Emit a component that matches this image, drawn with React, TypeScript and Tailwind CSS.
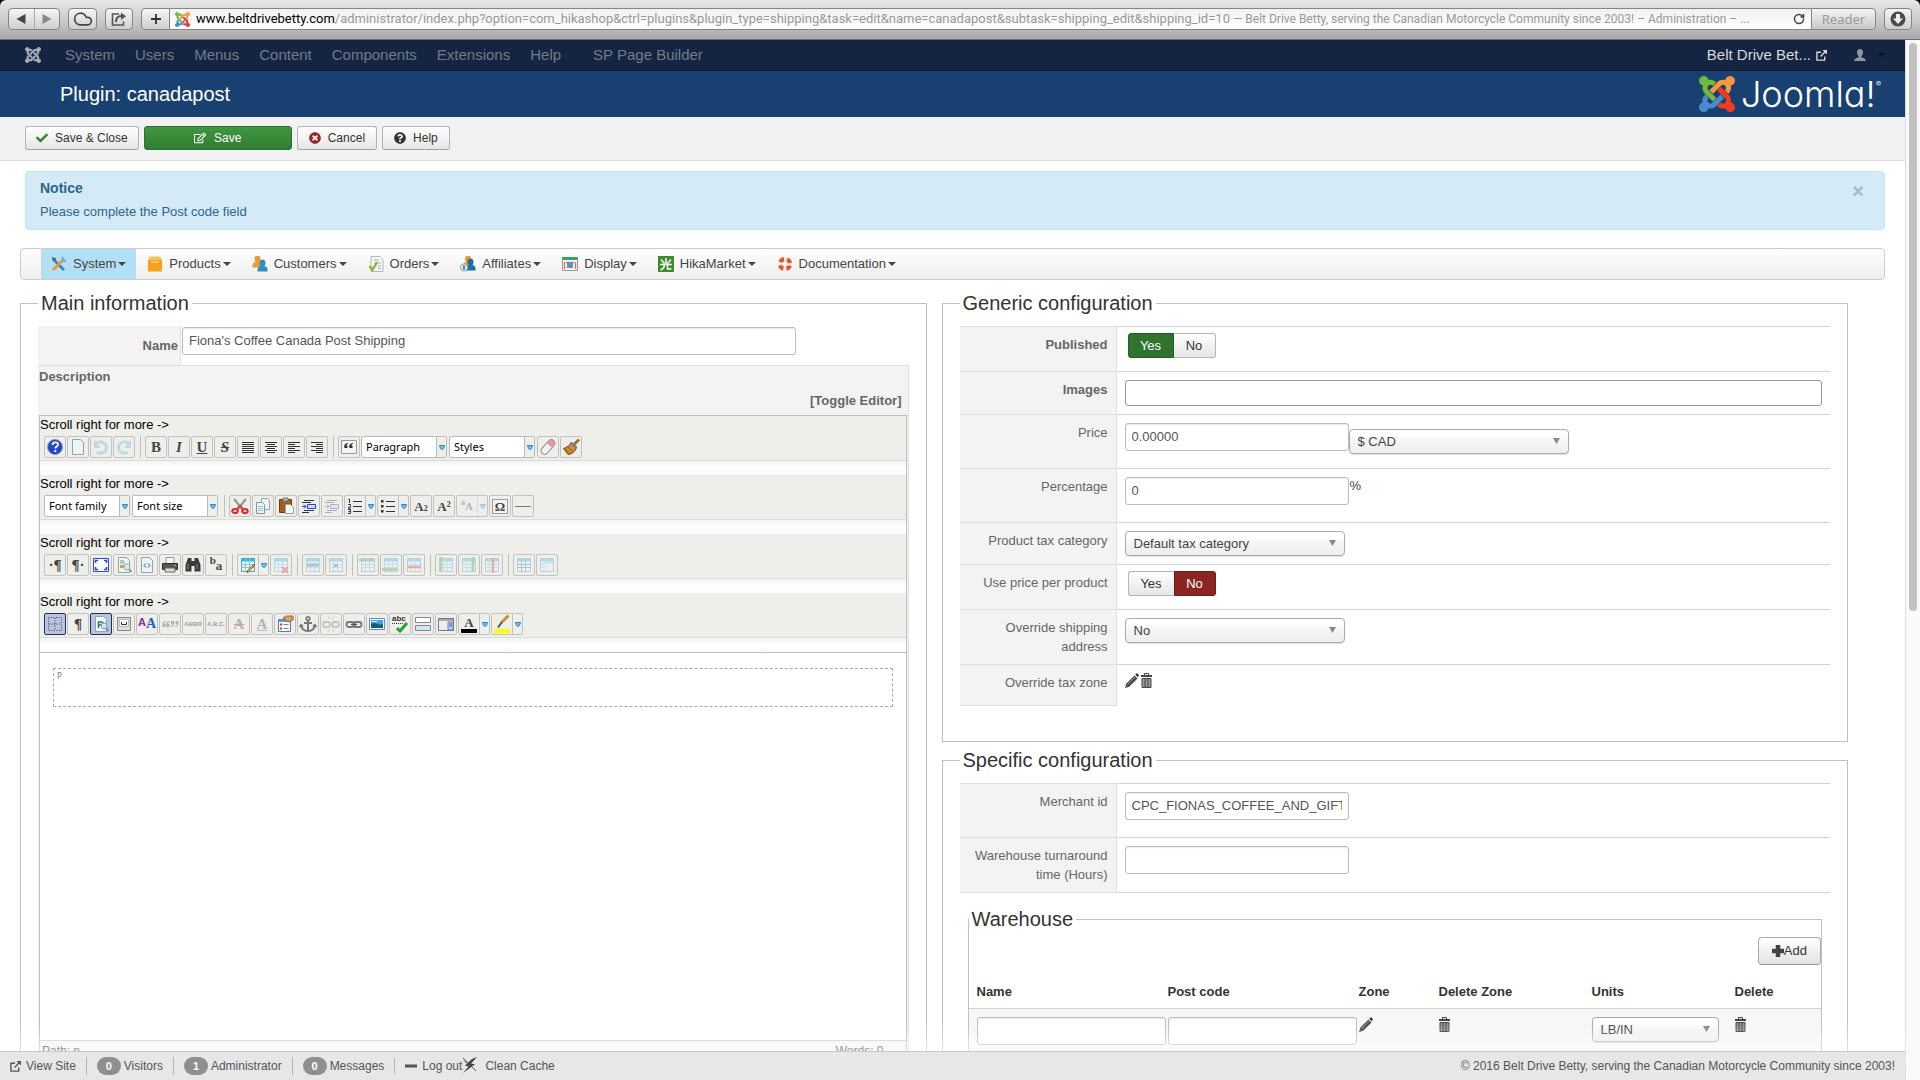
import React from "react";
import { FaCheck, FaTimesCircle, FaQuestionCircle, FaRegEdit } from "react-icons/fa";
import { Cloud, RotateCw } from "lucide-react";

type Kids = { children?: React.ReactNode };

const ARMS = [
  "M.6 92.1C.6 58.8 27.4 32 60.4 32c30 0 54.5 21.9 59.2 50.2 32.6-7.6 67.1.6 96.5 30l-44.3 44.3c-20.5-20.5-42.6-16.3-55.4-3.5-14.3 14.3-14.3 37.9 0 52.2l99.5 99.5-44 44.3c-87.7-87.2-49.7-49.7-99.8-99.7-26.8-26.5-35-64.8-24.8-98.9C20.4 144.6.6 120.7.6 92.1z",
  "M130.1 208.5l44.3 44.3c10-10 89.7-89.7 99.7-99.8 14.3-14.3 37.6-14.3 51.9 0 12.8 12.8 17 35-3.5 55.4l44 44.3c31.2-31.2 38.5-67.6 28.9-101.2 29.2-4.1 51.9-29.2 51.9-59.5 0-33.2-26.8-60.1-59.8-60.1-30.3 0-55.4 22.5-59.5 51.6-33.8-9.9-71.7-1.5-98.3 25.1-18.3 19.1-71.1 71.5-99.6 99.9z",
  "M396.4 360.7c8.2-32.7-.9-68.5-26.3-93.9-11.8-12.2 5 4.7-99.5-99.7l-44.3 44.3 99.7 99.7c14.3 14.3 14.3 37.6 0 51.9-12.8 12.8-35 17-55.4-3.5l-44 44.3c27.6 30.2 68 38.8 102.7 28 5.5 27.4 29.7 48.1 58.9 48.1 33 0 59.8-26.8 59.8-60.1 0-30.2-22.5-55-51.6-59.1z",
  "M312.1 307.6l-44-44.3c-87 86.4-50.4 50.4-99.7 99.8-14.3 14.3-37.6 14.3-51.9 0-13.1-13.4-16.9-35.3 3.2-55.4l-44-44.3c-30.2 30.2-38 65.2-29.5 98.3-26.7 6-46.2 29.9-46.2 58.2C0 453.2 26.8 480 59.8 480c28.6 0 52.5-19.8 58.6-46.7 32.7 8.2 68.5-.6 94.2-26 32.1-32 12.2-12.4 99.5-99.7z",
];

function JoomlaMark({ className, colors }: { className: string; colors: string[] }) {
  return (
    <svg className={className} viewBox="0 32 448 448" aria-hidden="true">
      {ARMS.map((d, i) => (
        <path key={i} d={d} fill={colors[i]} />
      ))}
    </svg>
  );
}
const BRAND = ["#71b93f", "#f9993a", "#f23a20", "#4a8bce"];
const MONO = ["#a3abb7", "#a3abb7", "#a3abb7", "#a3abb7"];

/* ---------- browser bar ---------- */
const chromeBtn =
  "flex h-[22px] items-center justify-center rounded border border-[#858585] bg-linear-to-b from-[#f6f6f6] to-[#cfcfcf] text-[#444]";

function BrowserBar() {
  return (
    <div className="flex h-10 shrink-0 items-start gap-2 rounded-t-md border-b border-[#6d6d6d] bg-linear-to-b from-[#e8e8e8] via-[#cccccc] to-[#a9a9a9] px-2 pt-2">
      <div className={chromeBtn + " w-[52px]"}>
        <button aria-label="Back" className="flex h-full flex-1 items-center justify-center border-r border-[#aaa]">
          <svg className="h-2.5 w-2.5" viewBox="0 0 10 10"><path d="M9.500 0v10L0.500 5z" fill="#444" /></svg>
        </button>
        <button aria-label="Forward" className="flex h-full flex-1 items-center justify-center">
          <svg className="h-2.5 w-2.5" viewBox="0 0 10 10"><path d="M.5 0v10L9.500 5z" fill="#8a8a8a" /></svg>
        </button>
      </div>
      <button aria-label="iCloud" className={chromeBtn + " w-[29px]"}><Cloud className="h-5 w-5" strokeWidth={2} /></button>
      <button aria-label="Share" className={chromeBtn + " w-7"}>
        <svg className="h-4 w-4" viewBox="0 0 16 16" fill="none" stroke="#555" strokeWidth="1.600">
          <path d="M8 3H1.500v11h11v-3.500" />
          <path d="M5 11c0-4 2-6 5.500-6" strokeWidth="2" />
          <path d="M10 1.500l5 3.700-5 3.700z" fill="#555" stroke="none" />
        </svg>
      </button>
      <div className="flex h-[22px] min-w-0 flex-1">
        <button aria-label="New tab" className="flex w-[29px] shrink-0 items-center justify-center rounded-l border border-[#858585] bg-linear-to-b from-[#f6f6f6] to-[#cfcfcf]">
          <svg className="h-3 w-3" viewBox="0 0 12 12"><path d="M6 1v10M1 6h10" stroke="#333" strokeWidth="1.800" /></svg>
        </button>
        <div className="flex min-w-0 flex-1 items-center border-y border-[#858585] bg-linear-to-b from-[#f1f1f1] to-white pl-[5px] font-['Roboto',sans-serif] whitespace-nowrap text-[#999]">
          <JoomlaMark className="mr-1.5 h-[15px] w-[15px] shrink-0" colors={BRAND} />
          <span className="shrink-0 text-[13px] text-black">www.beltdrivebetty.com</span>
          <span className="shrink-0 text-[13px]">
            /administrator/index.php?option=com_hikashop&amp;ctrl=plugins&amp;plugin_type=shipping&amp;task=edit&amp;name=canadapost&amp;subtask=shipping_edit&amp;shipping_id=10
          </span>
          <span className="ml-[3px] shrink-0 text-[12px]">
            — Belt Drive Betty, serving the Canadian Motorcycle Community since 2003! – Administration – ...
          </span>
          <button aria-label="Reload" className="mr-1.5 ml-auto text-[#444]"><RotateCw className="h-3 w-3" strokeWidth={3} /></button>
        </div>
        <button className="w-[65px] shrink-0 rounded-r border border-[#858585] bg-linear-to-b from-[#f4f4f4] to-[#c9c9c9] font-['Noto_Sans',sans-serif] text-[13px] leading-5 text-[#999]">
          Reader
        </button>
      </div>
      <button aria-label="Downloads" className={chromeBtn + " w-7"}>
        <svg className="h-4 w-4" viewBox="0 0 16 16">
          <circle cx="8" cy="8" r="7.500" fill="#4a4a4a" />
          <path d="M6 3h4v4.500h3L8 13 3 7.500h3z" fill="#eee" />
        </svg>
      </button>
    </div>
  );
}

/* ---------- Joomla bars ---------- */
function Caret({ className = "text-[#444]" }: { className?: string }) {
  return (
    <svg className={"h-1 w-2 " + className} viewBox="0 0 8 4" aria-hidden="true">
      <path d="M0 0h8L4 4z" fill="currentColor" />
    </svg>
  );
}

function TopNav() {
  const items = ["System", "Users", "Menus", "Content", "Components", "Extensions", "Help"];
  return (
    <nav className="flex h-[31px] shrink-0 items-center border-b border-[#0d1a2e] bg-[#152541] pr-[19px] pl-[25px] text-[15px] text-[#717a89]">
      <a href="#" aria-label="Joomla" className="mr-3.5"><JoomlaMark className="h-4 w-4" colors={MONO} /></a>
      {items.map((t) => (
        <a key={t} href="#" className="px-2.5">{t}</a>
      ))}
      <a href="#" className="pr-2.5 pl-[22px]">SP Page Builder</a>
      <a href="#" className="ml-auto flex items-center gap-[5px] text-[#d9d9d9]">
        Belt Drive Bet... <ExternalIcon className="h-[11px] w-[11px]" />
      </a>
      <button aria-label="User menu" className="ml-[27px] flex items-center gap-3">
        <svg className="h-3 w-3" viewBox="0 0 12 12" fill="#8e96a3">
          <path d="M6 0c2 0 3 1.400 3 3.200S8 6.600 7.300 7.300v.9c2.200.4 4.200 1.200 4.700 3.800H0c.5-2.600 2.500-3.400 4.700-3.800v-.9C4 6.600 3 5 3 3.200S4 0 6 0z" />
        </svg>
        <Caret className="text-[#0b1320]" />
      </button>
    </nav>
  );
}

function ExternalIcon({ className }: { className: string }) {
  return (
    <svg className={className} viewBox="0 0 12 12" fill="none" stroke="currentColor" strokeWidth="1.500" aria-hidden="true">
      <path d="M5.500 2.500H1V11h8.500V7" />
      <path d="M5 7l5-5" />
      <path d="M7 0h5v5z" fill="currentColor" stroke="none" />
    </svg>
  );
}

function Header() {
  return (
    <header className="flex h-[46px] shrink-0 items-center bg-[#184172] pr-6 pl-[60px] text-white">
      <h1 className="text-[20px] leading-7">Plugin: canadapost</h1>
      <div className="ml-auto flex items-center gap-1.5">
        <JoomlaMark className="h-9 w-9" colors={BRAND} />
        <span className="flex items-start font-['Inter',sans-serif] text-[36px] leading-9 font-light [font-feature-settings:'cv11']">
          Joomla!<span className="text-[8px] leading-4">®</span>
        </span>
      </div>
    </header>
  );
}

const tbBtn =
  "flex h-6 items-center rounded-[3px] border border-[#b3b3b3] border-b-[#a2a2a2] bg-linear-to-b from-white to-[#e6e6e6] text-[12px] text-[#333]";

function Toolbar() {
  return (
    <div className="flex h-11 shrink-0 items-start gap-[5px] border-b border-[#ddd] bg-[#f2f2f2] pt-[9px] pl-[25px]">
      <button className={tbBtn + " gap-[7px] px-2.5"}><FaCheck className="h-3 w-3 text-[#378137]" />Save &amp; Close</button>
      <button className="flex h-6 w-[148px] items-center justify-center gap-2 rounded-[3px] border border-[#2d6f2d] bg-linear-to-b from-[#409740] to-[#2f7d32] text-[12px] text-white">
        <FaRegEdit className="h-3 w-3" />Save
      </button>
      <button className={tbBtn + " gap-[7px] px-[11px]"}><FaTimesCircle className="h-3 w-3 text-[#942a25]" />Cancel</button>
      <button className={tbBtn + " gap-[7px] px-[11px]"}><FaQuestionCircle className="h-3 w-3" />Help</button>
    </div>
  );
}

function Notice() {
  return (
    <div role="status" className="mr-5 ml-[25px] flex h-[59px] rounded border border-[#bce8f1] bg-[#d4eaf7] pt-1.5 pr-5 pl-3.5 text-[#2c6789]">
      <div>
        <h4 className="text-[14px] leading-5 font-bold">Notice</h4>
        <p className="mt-1 text-[13px] leading-[19px]">Please complete the Post code field</p>
      </div>
      <button aria-label="Close" className="mt-px ml-auto h-6 text-[20px] leading-6 font-bold text-[#a5b9c4]">×</button>
    </div>
  );
}

/* ---------- HikaShop menu ---------- */
const Person = ({ x, y, c }: { x: number; y: number; c: string }) => (
  <g fill={c}>
    <ellipse cx={x} cy={y + 3} rx="3" ry="3.500" />
    <path d={`M${x - 5} ${y + 11.500}c-.5-4.500 1.500-5.500 5-5.500s5.500 1 5 5.500z`} />
  </g>
);
const menu: { label: string; icon: React.ReactNode }[] = [
  { label: "System", icon: <><path d="M2 3l11 11" stroke="#2d86c4" strokeWidth="2.600" /><path d="M12 1a4 4 0 0 0 0 4l3-.5" stroke="#5fa9dc" strokeWidth="2" fill="none" /><path d="M11 5L2 14" stroke="#e89a2c" strokeWidth="3" /><path d="M1 1l4 1v3L1 4z" fill="#5d6b77" /></> },
  { label: "Products", icon: <><path d="M1 4h14v11.500H1z" fill="#f5a11d" /><path d="M2.500.5H13L15 4H1z" fill="#fcc35a" /><path d="M4 6h8" stroke="#fff0cc" /></> },
  { label: "Customers", icon: <><Person x={5.500} y={0} c="#eb9b2f" /><Person x={10.500} y={4} c="#2c8fc2" /></> },
  { label: "Orders", icon: <><path d="M3 .5h9l3 3v12H3z" fill="#f6f6f6" stroke="#b5b8b8" /><path d="M6 4h5M6 7h7M10 10h3M10 12.500h3" stroke="#a9afb3" /><path d="M1.500 10l3 4L9 6" stroke="#86b832" strokeWidth="2.200" fill="none" /></> },
  { label: "Affiliates", icon: <><Person x={8} y={0} c="#eb9b2f" /><Person x={10.500} y={3} c="#1d6f9f" /><circle cx="4" cy="11.500" r="3.600" fill="#e9f3f8" stroke="#77a6bf" /><path d="M4 9.500v4M2.800 10.500h2.400M2.800 12.500h2.400" stroke="#456" /></> },
  { label: "Display", icon: <><path d="M.5 1.500h15v13H.5z" fill="#fff" stroke="#9a9a9a" /><path d="M.5 1h15v3H.5z" fill="#2fa95f" /><path d="M2.500 6v7M4 6.500h8M13.500 6v7" stroke="#e06a55" strokeWidth="1.500" /><path d="M5 6.500h6v5.500H5z" fill="#4c97d4" /></> },
  { label: "HikaMarket", icon: <><path d="M0 0h16v16H0z" fill="#3f8b2c" /><path d="M8 2v6M3 3.500l3.500 4M13 3.500l-3.500 4M2 8.500h12M6.500 8.500c0 3-1.500 4.500-4 5.500M9.500 8.500v4.500h4" stroke="#fff" strokeWidth="1.500" fill="none" /></> },
  { label: "Documentation", icon: <><circle cx="8" cy="8" r="5" fill="none" stroke="#ececec" strokeWidth="4.500" /><circle cx="8" cy="8" r="5" fill="none" stroke="#de5b28" strokeWidth="4.200" strokeDasharray="4.600 3.250" strokeDashoffset="-1.600" /></> },
];

function HikaMenu() {
  return (
    <nav className="mr-5 ml-5 flex h-8 gap-px rounded border border-[#ccc] bg-linear-to-b from-white to-[#eeeeee] pl-5 text-[13px] text-[#444]">
      {menu.map((m, i) => (
        <a key={m.label} href="#" className={"flex items-center px-2.5 " + (i === 0 ? "bg-[#b3dff4]" : "")}>
          <svg className="mr-1.5 h-4 w-4" viewBox="0 0 16 16" aria-hidden="true">{m.icon}</svg>
          {m.label}
          <span className="ml-0.5"><Caret /></span>
        </a>
      ))}
    </nav>
  );
}

/* ---------- editor toolbar ---------- */
const serif = "font-['Liberation_Serif',serif] font-bold leading-none text-[#444]";
const Svg = ({ children }: Kids) => <svg className="h-5 w-5" viewBox="0 0 20 20" fill="none" aria-hidden="true">{children}</svg>;
const Lines = ({ rows }: { rows: [number, number][] }) => (
  <Svg>{rows.map(([a, b], i) => <path key={i} d={`M${a} ${5.500 + i * 2}H${b}`} stroke="#333" />)}</Svg>
);
const Page = ({ c = "#eaf6f8" }: { c?: string }) => <path d="M4.500 2.500h8l3 3v12h-11z" fill={c} stroke="#8fa6a6" />;
const Grid = () => (
  <>
    <path d="M3.500 3.500h13v13h-13z" fill="#eafaff" stroke="#5f9fb8" />
    <path d="M3.500 3.500h13v3h-13z" fill="#35b5ea" />
    <path d="M3 9.500h14M3 12.500h14M7.500 4v13M11.500 4v13" stroke="#7ec6e2" />
  </>
);
const Bolt = ({ label, cls = "" }: { label: string; cls?: string }) => <span className={serif + " text-[15px] " + cls}>{label}</span>;
const Tri = () => <svg className="h-[5px] w-1.5" viewBox="0 0 6 5"><path d="M.5.5h5L4.500 3.500 3 4.500 1.500 3.500z" fill="#7cc0f2" stroke="#2b84d2" /></svg>;

type Tool = { n: string; i?: React.ReactNode; off?: boolean; on?: boolean; drop?: boolean; sel?: boolean; sep?: boolean };
const sep: Tool = { n: "", sep: true };

const indent = (
  <Svg><path d="M5 4.500h10M3 6.500h9M3 16.500h7M5 14.500h10" stroke="#333" /><path d="M8.500 8.500h8v4h-8z" fill="#cfdcff" stroke="#2743d6" /><path d="M3 10.500h4M5 8.500l2 2-2 2" stroke="#2743d6" /></Svg>
);
const listLines = <path d="M8 5.500h9M8 10.500h9M8 15.500h9" stroke="#333" />;

const rows: Tool[][] = [
  [
    { n: "Help", i: <Svg><circle cx="10" cy="10" r="7.500" fill="#2149cf" stroke="#8a93a8" /><path d="M7.500 8c0-3.500 5.500-3.500 5.500-.5 0 2-2.700 1.800-2.700 4M10.300 13v2" stroke="#fff" strokeWidth="1.800" /></Svg> },
    { n: "New document", i: <Svg><Page /></Svg> },
    { n: "Undo", off: true, i: <Svg><path d="M5 7a6 5.500 0 1 1 1 8" stroke="#6fb5e4" strokeWidth="3" /><path d="M3 3v8h7z" fill="#6fb5e4" /></Svg> },
    { n: "Redo", off: true, i: <Svg><path d="M15 7a6 5.500 0 1 0-1 8" stroke="#6fb5e4" strokeWidth="3" /><path d="M17 3v8h-7z" fill="#6fb5e4" /></Svg> },
    sep,
    { n: "Bold", i: <Bolt label="B" cls="text-[#333]" /> },
    { n: "Italic", i: <Bolt label="I" cls="italic" /> },
    { n: "Underline", i: <Bolt label="U" cls="underline" /> },
    { n: "Strikethrough", i: <Bolt label="S" cls="italic line-through" /> },
    { n: "Justify", i: <Lines rows={[[4, 16], [4, 16], [4, 16], [4, 16], [4, 16], [4, 16]]} /> },
    { n: "Center", i: <Lines rows={[[4, 16], [6, 14], [4, 16], [6, 14], [4, 16], [6, 14]]} /> },
    { n: "Left", i: <Lines rows={[[4, 16], [4, 11], [4, 16], [4, 11], [4, 16], [4, 11]]} /> },
    { n: "Right", i: <Lines rows={[[4, 16], [9, 16], [4, 16], [9, 16], [4, 16], [9, 16]]} /> },
    sep,
    { n: "Blockquote", i: <Svg><path d="M2.500 3.500h15v13h-15z" fill="#f6f6f6" stroke="#999" /><path d="M9 6c-4 .5-4 3-3.500 5h3V8.500h-1C7.500 7.500 8 7 9 7zM14 6c-4 .5-4 3-3.500 5h3V8.500h-1C12.500 7.500 13 7 14 7z" fill="#333" /></Svg> },
    { n: "Paragraph", sel: true },
    { n: "Styles", sel: true },
    { n: "Eraser", i: <Svg><g transform="rotate(-48 10 10)"><rect x="1.500" y="6.500" width="17" height="7" rx="3.500" fill="#f4f4f4" stroke="#8f8f8f" /><path d="M12 7h3.500a3 3 0 0 1 0 6H12z" fill="#ef93a0" /></g></Svg> },
    { n: "Clean up", i: <Svg><path d="M18 2.500l-5 5" stroke="#a8691c" strokeWidth="2.600" /><path d="M10 5.500l5.500 5C14 15 11 17 7 17.500L2.500 11.500C6 10.500 8.500 8.500 10 5.500z" fill="#cf8a35" stroke="#7d4c14" /><path d="M4 12l4 4.500M7 10l5 5" stroke="#8d5a1a" /><path d="M10 5.500l5.500 5" stroke="#5a7fa8" strokeWidth="2" /></Svg> },
  ],
  [
    { n: "Font family", sel: true },
    { n: "Font size", sel: true },
    sep,
    { n: "Cut", i: <Svg><path d="M4 3l9 11M16 3L7 14" stroke="#8b9399" strokeWidth="2" /><ellipse cx="5" cy="15" rx="2.700" ry="2" stroke="#d92b2b" strokeWidth="2.200" /><ellipse cx="15" cy="15" rx="2.700" ry="2" stroke="#d92b2b" strokeWidth="2.200" /><path d="M7 13l3-3 3 3" stroke="#e23a3a" strokeWidth="2" /></Svg> },
    { n: "Copy", i: <Svg><path d="M8.500 2.500h6l2 2v9h-8z" fill="#eaf6f8" stroke="#8fa6a6" /><path d="M3.500 6.500h6l2 2v9h-8z" fill="#eaf6f8" stroke="#7f9a9a" /><path d="M5 10.500h5M5 12.500h5M5 14.500h5" stroke="#9fc3c8" /></Svg> },
    { n: "Paste", i: <Svg><path d="M3.500 3.500h12v13h-12z" fill="#a8591c" stroke="#6e3a12" /><path d="M7 2h5v3H7z" fill="#bbb" stroke="#777" /><path d="M9.500 8.500h5l3 3v6h-8z" fill="#f2fafb" stroke="#8fa6a6" /></Svg> },
    { n: "Indent", i: indent },
    { n: "Outdent", off: true, i: indent },
    { n: "Numbered list", drop: true, i: <Svg>{listLines}<path d="M4.500 3v4M3.500 3.500h1M3 8.500h2.500v2L3 12h3M3 13.500h2.500v4H3M3.500 15.500h2" stroke="#333" /></Svg> },
    { n: "Bullet list", drop: true, i: <Svg>{listLines}<path d="M3 4h2.500v2.500H3zM3 9h2.500v2.500H3zM3 14h2.500v2.500H3z" fill="#333" /></Svg> },
    { n: "Subscript", i: <span className={serif + " text-[13px]"}>A<span className="text-[8px]">2</span></span> },
    { n: "Superscript", i: <span className={serif + " text-[13px]"}>A<sup className="text-[8px]">2</sup></span> },
    { n: "Case", off: true, drop: true, i: <span className={serif + " text-[11px]"}><sup>a</sup>A</span> },
    { n: "Special character", i: <span className={serif + " flex h-[15px] w-4 items-center justify-center border border-[#999] bg-[#f4f4f4] text-[13px]"}>Ω</span> },
    { n: "Horizontal rule", i: <Svg><path d="M2 10.500h16" stroke="#777" /></Svg> },
  ],
  [
    { n: "Left to right", i: <span className={serif + " text-[15px]"}>·¶</span> },
    { n: "Right to left", i: <span className={serif + " text-[15px]"}>¶·</span> },
    { n: "Fullscreen", i: <Svg><path d="M2.500 3.500h15v13h-15z" fill="#fff" stroke="#2a46d8" /><path d="M4.500 8V5.500H7M13 5.500h2.500V8M15.500 12v2.500H13M7 14.500H4.500V12" stroke="#2a46d8" strokeWidth="1.500" /></Svg> },
    { n: "Preview", i: <Svg><Page /><path d="M6 8h5M6 6h4" stroke="#79a" /><path d="M6 10h4v3H6z" fill="#d9a32c" /><circle cx="13" cy="12" r="3" fill="#d9ecfa" stroke="#8fa9bd" /><path d="M15 14l2.500 3" stroke="#999" strokeWidth="2" /></Svg> },
    { n: "Source", i: <Svg><Page /><path d="M9 8.500l-2 2 2 2M11 8.500l2 2-2 2" stroke="#444" /></Svg> },
    { n: "Print", i: <Svg><path d="M6 2.500h8V9H6z" fill="#f4fafa" stroke="#999" /><path d="M2.500 8.500h15v6h-15z" fill="#555" stroke="#333" /><path d="M5 13h10v4H5z" fill="#ddd" stroke="#666" /><path d="M14 10.500h2" stroke="#6e4" /></Svg> },
    { n: "Find", i: <Svg><path d="M5 3h3.500v3H10h1.500V3H15l2.500 7v6.500h-6V11h-3v5.500h-6V10z" fill="#3a3a3a" /><path d="M5 9v5M14 9v5" stroke="#888" /></Svg> },
    { n: "Replace", i: <span className={serif + " text-[13px]"}><sup className="text-[11px]">b</sup>a</span> },
    sep,
    { n: "Insert table", drop: true, i: <Svg><Grid /><path d="M17 10l-6 6.500-2 1 .7-2.300L16 9z" fill="#f2c643" stroke="#8a5a1a" /></Svg> },
    { n: "Delete table", off: true, i: <Svg><Grid /><path d="M11 12l6 6M17 12l-6 6" stroke="#d22" strokeWidth="2" /></Svg> },
    sep,
    { n: "Row properties", off: true, i: <Svg><Grid /><path d="M4 10h12" stroke="#46c" strokeWidth="3" /></Svg> },
    { n: "Cell properties", off: true, i: <Svg><Grid /><path d="M8 9h4v3H8z" fill="#46c" /></Svg> },
    sep,
    { n: "Row before", off: true, i: <Svg><Grid /><path d="M1 5h15" stroke="#3a3" strokeWidth="2.500" /></Svg> },
    { n: "Row after", off: true, i: <Svg><Grid /><path d="M1 14.500h15" stroke="#3a3" strokeWidth="2.500" /></Svg> },
    { n: "Delete row", off: true, i: <Svg><Grid /><path d="M3 12h14" stroke="#d33" strokeWidth="2.500" /></Svg> },
    sep,
    { n: "Column before", off: true, i: <Svg><Grid /><path d="M5 2v14" stroke="#3a3" strokeWidth="2.500" /></Svg> },
    { n: "Column after", off: true, i: <Svg><Grid /><path d="M14 2v14" stroke="#3a3" strokeWidth="2.500" /></Svg> },
    { n: "Delete column", off: true, i: <Svg><Grid /><path d="M11 3v15" stroke="#d33" strokeWidth="2.500" /></Svg> },
    sep,
    { n: "Split cells", off: true, i: <Svg><Grid /><path d="M3 9.500h14M3 12.500h14M7.500 4v13M11.500 4v13" stroke="#56c" /></Svg> },
    { n: "Merge cells", off: true, i: <Svg><Grid /><path d="M7 8h9v8H7z" fill="#eef" stroke="#9be" /></Svg> },
  ],
  [
    { n: "Visual aid", on: true, i: <Svg><path d="M3.500 3.500h13v13h-13zM10 4v12M4 10h12" stroke="#445" strokeDasharray="1 1.500" /></Svg> },
    { n: "Show characters", i: <span className={serif + " text-[15px]"}>¶</span> },
    { n: "Visual blocks", on: true, i: <Svg><Page c="#f3fbff" /><path d="M7.500 14V8h2.500c2.500 0 2.500 3 0 3H8" stroke="#1a7a70" strokeWidth="1.500" /><circle cx="13" cy="12" r="3" fill="#cfe3f5" stroke="#7f9fbd" /><path d="M15 14l2.500 3" stroke="#889" strokeWidth="2" /></Svg> },
    { n: "Non-breaking space", i: <Svg><path d="M3.500 3.500h13v13h-13z" fill="#ddd" stroke="#888" /><path d="M5.500 5.500h9v7h-9z" fill="#f8f8f8" stroke="#bbb" /><path d="M7.500 8v2.500h5V8" stroke="#333" /></Svg> },
    { n: "Style", i: <span className="flex items-center font-['Liberation_Serif',serif] text-[14px] leading-none font-bold text-[#1f5fb4]"><span className="pb-1 font-['Liberation_Sans',sans-serif] text-[11px] text-[#8a2d8f]">A</span>A</span> },
    { n: "Citation", off: true, i: <Svg><path d="M6 7c-4 .5-4 3-3.500 6h3v-3h-1.500C4 9 5 8.500 6 8zM10 7c-4 .5-4 3-3.500 6h3v-3H8C8 9 9 8.500 10 8zM11 13c3-.5 3.500-3 3-6h-3v3h1.500c0 1-.5 1.500-1.500 2zM15.500 13c3-.5 3.500-3 3-6h-3v3H17c0 1-.5 1.500-1.500 2z" fill="#444" /></Svg> },
    { n: "Abbreviation", off: true, i: <span className="text-[6px] font-bold text-black">ABBR</span> },
    { n: "Acronym", off: true, i: <span className="text-[6px] font-bold text-black">A.B.C.</span> },
    { n: "Deletion", off: true, i: <Bolt label="A" cls="line-through decoration-red-600" /> },
    { n: "Insertion", off: true, i: <Bolt label="A" cls="underline decoration-blue-600" /> },
    { n: "Attributes", i: <Svg><path d="M3.500 5.500h12v12h-12z" fill="#f6fbff" stroke="#4b7fb8" /><path d="M3.500 5.500h12v2.500h-12z" fill="#5c9bd8" /><path d="M5 10.500h2M5 14.500h2" stroke="#d33" strokeWidth="2" /><path d="M8.500 10.500h5M8.500 14.500h5" stroke="#789" /><path d="M8 4l3-2h7v4l-5 2z" fill="#dca062" stroke="#9c6428" /></Svg> },
    { n: "Anchor", i: <Svg><circle cx="10" cy="4.500" r="1.800" stroke="#777" strokeWidth="1.600" /><path d="M10 6.500V17M6 9h8M3 11c.5 4 3.500 6 7 6s6.500-2 7-6M1.800 13L3 11l2 1.500M18.200 13L17 11l-2 1.500" stroke="#777" strokeWidth="2" /></Svg> },
    { n: "Unlink", off: true, i: <Svg><rect x="2" y="8" width="7" height="5" rx="2.500" stroke="#777" strokeWidth="1.800" /><rect x="11" y="8" width="7" height="5" rx="2.500" stroke="#777" strokeWidth="1.800" /><path d="M7 2l1.500 3M13 2l-1.500 3M7 18l1.500-3M13 18l-1.500-3" stroke="#999" /></Svg> },
    { n: "Link", i: <Svg><rect x="2.500" y="8" width="8" height="5" rx="2.500" stroke="#777" strokeWidth="1.800" /><rect x="9.500" y="8" width="8" height="5" rx="2.500" stroke="#777" strokeWidth="1.800" /><path d="M7 10.500h6" stroke="#555" strokeWidth="1.500" /></Svg> },
    { n: "Image", i: <Svg><path d="M2.500 4.500h15v11h-15z" fill="#fff" stroke="#5b8fc4" /><path d="M4 6h12v8H4z" fill="#4aa0e0" /><path d="M4 10c4-3 7 2 12 0v4H4z" fill="#1c5b7a" /><path d="M5 7.500h5" stroke="#dff" /></Svg> },
    { n: "Spellcheck", i: <Svg><path d="M7 14l3 3 7-8" stroke="#22a52a" strokeWidth="3" /><path d="M2 9.500h11" stroke="#333" strokeDasharray="1 1" /><text x="2" y="7" fontSize="8" fontWeight="700" fill="#333">abc</text></Svg> },
    { n: "Page break", i: <Svg><path d="M2.500 3.500h15v5h-15z" fill="#fff" stroke="#888" /><path d="M2.500 11.500h15v5h-15z" fill="#cfe6fa" stroke="#888" /></Svg> },
    { n: "Read more", i: <Svg><path d="M2.500 4.500h15v12h-15z" fill="#eee" stroke="#777" /><path d="M3 5h14v2H3z" fill="#aaa" /><path d="M12 8h5v8h-5z" fill="#b9cff0" stroke="#68a" /><path d="M13 10h3M13 12h3" stroke="#36c" /></Svg> },
    { n: "Text color", drop: true, i: <span className={serif + " w-4 border-b-4 border-black text-[13px] text-[#333]"}>A</span> },
    { n: "Highlight", drop: true, i: <Svg><path d="M2 15h16v4H2z" fill="#ff0" /><path d="M16.500 1.500l-7 7" stroke="#c4932a" strokeWidth="3" /><path d="M10 8l-4 5.500" stroke="#555" strokeWidth="2" /></Svg> },
  ],
];

function ToolItem({ t }: { t: Tool }) {
  if (t.sep) return <span className="mr-[3px] ml-1 h-[22px] w-px bg-[#c0c0bc]" />;
  if (t.sel)
    return (
      <button className="mr-px flex h-[22px] w-[86px] rounded-xs border border-[#bbb] bg-white font-['Noto_Sans',sans-serif] text-[11px] leading-5 text-black">
        <span className="flex-1 pl-1 text-left">{t.n}</span>
        <span className="flex h-full w-2.5 items-center justify-center border-l border-[#bbb] bg-[#eeeeea]"><Tri /></span>
      </button>
    );
  return (
    <button
      aria-label={t.n}
      className={
        "flex h-[22px] items-center rounded-xs border " +
        (t.drop ? "w-8 " : "w-[22px] ") +
        (t.on ? "border-[#1b2f66] bg-[#b9c3dd]" : "border-[#c2c2be]")
      }
    >
      <span className={"flex h-full w-5 shrink-0 items-center justify-center " + (t.off ? "opacity-35" : "")}>{t.i}</span>
      {t.drop && (
        <span className={"flex h-full w-2.5 items-center justify-center border-l border-[#c2c2be] " + (t.off ? "opacity-40" : "")}><Tri /></span>
      )}
    </button>
  );
}

function Editor() {
  return (
    <div className="border border-[#bfbfbf]">
      {rows.map((r, i) => (
        <div key={i}>
          <div className="border-b border-[#dcdcda] bg-[#eeeeea] pb-0.5">
            <p className="pb-0.5 text-[13px] leading-[18px] text-black">Scroll right for more -&gt;</p>
            <div role="toolbar" aria-label={"Editor row " + (i + 1)} className="flex gap-px pl-1">
              {r.map((t, j) => <ToolItem key={j} t={t} />)}
            </div>
          </div>
          <div className="h-3.5 bg-linear-to-b from-[#f3f3f3] via-white to-[#fafafa]" />
        </div>
      ))}
      <div className="border-t border-[#bfbfbf] bg-white px-[13px] pt-[15px]">
        <div className="h-[39px] border border-dashed border-[#aaa] pl-[3px] font-['Noto_Sans',sans-serif] text-[8px] leading-[14px] text-[#777]">P</div>
        <div className="h-[333px]" />
      </div>
      <div className="flex h-6 justify-between border-t border-[#ccc] bg-[#f4f4f2] pr-[22px] pl-0.5 text-[12px] leading-5 text-[#333]">
        <span>Path: p</span>
        <span>Words: 0</span>
      </div>
    </div>
  );
}

/* ---------- forms ---------- */
function Panel({ title, className = "", inner = false, children }: Kids & { title: string; className?: string; inner?: boolean }) {
  return (
    <fieldset className={"min-w-0 border border-[#c1c1c1] " + (inner ? "mx-2 " : "px-[17px] ") + className}>
      <legend className="px-[3px] text-[20px] leading-7 text-[#333]">{title}</legend>
      {children}
    </fieldset>
  );
}

const inputCls =
  "block h-7 rounded-[3px] border border-[#bdbdbd] bg-white px-1.5 pb-0.5 text-[13px] leading-5 text-[#555] shadow-[inset_0_1px_1px_rgba(0,0,0,0.08)]";

function Dropdown({ id, label, options, className = "w-[220px]" }: { id: string; label?: string; options: string[]; className?: string }) {
  return (
    <div className={"relative " + className}>
      <select
        id={id}
        aria-label={label}
        className="block h-[25px] w-full appearance-none rounded border border-[#aaa] bg-linear-to-b from-white from-20% via-[#f5f5f5] via-50% to-[#eeeeee] px-2 text-[13px] leading-5 text-[#444] shadow-[0_1px_1px_rgba(0,0,0,0.12)]"
      >
        {options.map((o) => <option key={o}>{o}</option>)}
      </select>
      <svg className="pointer-events-none absolute top-[9px] right-[9px] h-1.5 w-[7px]" viewBox="0 0 7 6"><path d="M0 0h7L3.500 6z" fill="#888" /></svg>
    </div>
  );
}

function YesNo({ name, yes }: { name: string; yes: boolean }) {
  const base = "relative flex h-[25px] items-center justify-center border text-[13px] ";
  const plain = "border-[#b5b5b5] bg-linear-to-b from-white to-[#e6e6e6] text-[#333] ";
  return (
    <div role="radiogroup" aria-label={name} className="ml-[3px] flex">
      <label className={base + "w-[46px] rounded-l-[3px] " + (yes ? "border-[#235c26] bg-[#2e742f] text-white" : plain + "border-r-0")}>
        <input type="radio" name={name} defaultChecked={yes} className="sr-only" />Yes
      </label>
      <label className={base + "w-[42px] rounded-r-[3px] " + (yes ? plain + "border-l-0" : "border-[#6d1b18] bg-[#8a2521] text-white")}>
        <input type="radio" name={name} defaultChecked={!yes} className="sr-only" />No
      </label>
    </div>
  );
}

const PencilIcon = () => (
  <svg className="h-[15px] w-3.5" viewBox="0 0 14 15" aria-hidden="true">
    <path d="M0 15l1.200-4.200L9.500 2.500l3 3L4.200 13.800z" fill="#4a4a4a" />
    <path d="M10.300 1.700L12 0l2 2.300-1.200 2z" fill="#333" />
    <path d="M2.500 11.500l8-8" stroke="#999" />
  </svg>
);
const TrashIcon = () => (
  <svg className="h-[15px] w-[11px]" viewBox="0 0 11 15" fill="none" aria-hidden="true">
    <path d="M3.500 2.500v-2h4v2" stroke="#444" />
    <path d="M0 3h11" stroke="#444" strokeWidth="2" />
    <path d="M1 5.500h9v9H1z" fill="#999" stroke="#444" />
    <path d="M4 6v8M7 6v8" stroke="#444" />
  </svg>
);

type RowProps = Kids & { label: string; id?: string; h: string; bold?: boolean; pad?: string; last?: boolean; ruled?: boolean };

function Row({ label, id, h, bold, pad = "pt-2", last, ruled, children }: RowProps) {
  return (
    <tr className={h}>
      <th scope="row" className={"w-[157px] border-t border-r border-[#e0e0e0] bg-[#f3f3f3] pt-2 pr-2 pl-2 text-right align-top text-[#666] " + (bold ? "font-bold" : "font-normal") + (last ? " border-b" : "")}>
        <label htmlFor={id} className="block">{label}</label>
      </th>
      <td className={"border-t border-[#d3d3d3] px-2 align-top " + pad + (ruled ? " border-b" : "")}>{children}</td>
    </tr>
  );
}

const formTable = "mt-[9px] w-full border-separate border-spacing-0 text-[13px] leading-[19px]";

function MainInformation() {
  return (
    <Panel title="Main information">
      <div className="mt-[9px] text-[13px] leading-[19px] font-bold text-[#666]">
        <div className="flex h-[39px]">
          <label htmlFor="name" className="w-[143px] border-r border-[#e0e0e0] bg-[#f3f3f3] pt-2.5 pr-0.5 text-right">Name</label>
          <div className="min-w-0 flex-1 pt-px pl-px">
            <input id="name" defaultValue="Fiona's Coffee Canada Post Shipping" className={inputCls + " w-[614px] max-w-full font-normal"} />
          </div>
        </div>
        <div className="border-t border-r border-[#e0e0e0] bg-[#f3f3f3] pr-px pl-px">
          <div className="pt-px">Description</div>
          <div className="flex justify-end pt-[5px] pr-[5px] pb-[5px]">
            <button className="font-bold">[Toggle Editor]</button>
          </div>
          <div className="font-normal"><Editor /></div>
        </div>
      </div>
    </Panel>
  );
}

function Generic() {
  return (
    <Panel title="Generic configuration" className="pb-[35px]">
      <table className={formTable}>
        <tbody>
          <Row label="Published" bold h="h-[45px]" pad="pt-1.5"><YesNo name="Published" yes /></Row>
          <Row label="Images" id="images" bold h="h-[43px]">
            <input id="images" className="block h-[26px] w-full rounded-[3px] border border-[#999] bg-white px-1.5" />
          </Row>
          <Row label="Price" id="price" h="h-[54px]">
            <div className="flex">
              <input id="price" defaultValue="0.00000" className={inputCls + " w-56"} />
              <div className="pt-1.5"><Dropdown id="currency" label="Currency" options={["$ CAD"]} /></div>
            </div>
          </Row>
          <Row label="Percentage" id="pct" h="h-[54px]">
            <div className="flex gap-px">
              <input id="pct" defaultValue="0" className={inputCls + " w-56"} />
              <span className="leading-[17px] text-[#444]">%</span>
            </div>
          </Row>
          <Row label="Product tax category" id="tax" h="h-[42px]"><Dropdown id="tax" options={["Default tax category"]} /></Row>
          <Row label="Use price per product" h="h-[45px]" pad="pt-1.5"><YesNo name="Use price per product" yes={false} /></Row>
          <Row label="Override shipping address" id="addr" h="h-[55px]"><Dropdown id="addr" options={["No"]} /></Row>
          <Row label="Override tax zone" h="h-[42px]" last>
            <div className="flex gap-0.5">
              <button aria-label="Edit tax zone"><PencilIcon /></button>
              <button aria-label="Delete tax zone"><TrashIcon /></button>
            </div>
          </Row>
        </tbody>
      </table>
    </Panel>
  );
}

function Warehouse() {
  return (
    <Panel title="Warehouse" inner className="mt-3 border-b-0">
      <div className="mt-1 flex justify-end">
        <button className="flex h-7 items-center rounded border border-[#aaa] border-b-[#999] bg-linear-to-b from-white to-[#e3e3e3] px-[13px] text-[13px] text-[#333]">
          <svg className="h-3 w-3" viewBox="0 0 12 12"><path d="M6 0v12M0 6h12" stroke="#444" strokeWidth="4.500" /></svg>
          Add
        </button>
      </div>
      <table className="mt-[9px] w-full table-fixed border-separate border-spacing-0 text-left text-[13px] leading-[19px] text-[#333]">
        <thead>
          <tr className="h-[34px]">
            <th className="w-[199px] pl-2">Name</th>
            <th className="w-[191px]">Post code</th>
            <th className="w-20">Zone</th>
            <th className="w-[153px]">Delete Zone</th>
            <th className="w-[143px]">Units</th>
            <th>Delete</th>
          </tr>
        </thead>
        <tbody>
          <tr className="h-[54px] *:border-t *:border-[#d3d3d3] *:bg-[#f7f7f7] *:pt-2 *:align-top">
            <td className="pl-2"><input aria-label="Name" className={inputCls + " w-[189px]"} /></td>
            <td><input aria-label="Post code" className={inputCls + " w-[189px]"} /></td>
            <td><button aria-label="Edit zone" className="block"><PencilIcon /></button></td>
            <td><button aria-label="Delete zone" className="block"><TrashIcon /></button></td>
            <td><Dropdown id="units" label="Units" options={["LB/IN"]} className="w-[127px]" /></td>
            <td><button aria-label="Delete" className="block"><TrashIcon /></button></td>
          </tr>
        </tbody>
      </table>
    </Panel>
  );
}

function Specific() {
  return (
    <Panel title="Specific configuration" className="mt-1">
      <table className={formTable}>
        <tbody>
          <Row label="Merchant id" id="merchant" h="h-[54px]">
            <input id="merchant" defaultValue="CPC_FIONAS_COFFEE_AND_GIFTS" className={inputCls + " w-56"} />
          </Row>
          <Row label="Warehouse turnaround time (Hours)" id="turn" h="h-14" last ruled>
            <input id="turn" className={inputCls + " w-56"} />
          </Row>
        </tbody>
      </table>
      <Warehouse />
    </Panel>
  );
}

/* ---------- status bar ---------- */
function Count({ n, label }: { n: string; label: string }) {
  return (
    <span className="flex items-center gap-[3px] border-l border-[#b5b5b5] px-2.5 leading-4">
      <span className="flex h-[18px] w-6 items-center justify-center rounded-full bg-[#8f8f8f] text-[11px] font-bold text-white">{n}</span>
      {label}
    </span>
  );
}

function StatusBar() {
  return (
    <footer className="relative flex h-[29px] shrink-0 items-center border-t border-[#c9c9c9] bg-[#e7e7e7] pr-2.5 pl-2.5 text-[12px] text-[#555] shadow-[0_-15px_15px_rgba(255,255,255,0.5)]">
      <a href="#" className="mr-2.5 flex items-center gap-[5px]"><ExternalIcon className="h-[11px] w-[11px]" />View Site</a>
      <Count n="0" label="Visitors" />
      <Count n="1" label="Administrator" />
      <Count n="0" label="Messages" />
      <a href="#" className="flex items-center gap-[5px] border-l border-[#b5b5b5] pl-2.5 leading-4">
        <svg className="h-1 w-3" viewBox="0 0 12 4"><path d="M0 .5h12v3H0z" fill="#555" /></svg>
        Log out
      </a>
      <a href="#" className="flex items-center gap-[7px]">
        <svg className="h-4 w-4 self-start" viewBox="0 0 16 16" aria-hidden="true">
          <path d="M15 0L9 6.500l4 .8L1 16l5.500-6.500L3 8.500 10 2z" fill="#444" />
          <path d="M1 1l13 13M2 3.500l3 3" stroke="#555" fill="none" />
        </svg>
        Clean Cache
      </a>
      <span className="ml-auto">© 2016 Belt Drive Betty, serving the Canadian Motorcycle Community since 2003!</span>
    </footer>
  );
}

export default function App() {
  return (
    <div className="flex h-screen flex-col bg-black font-['Liberation_Sans',Arial,sans-serif] text-[13px]">
      <BrowserBar />
      <div className="flex min-h-0 flex-1 bg-white">
        <div className="flex min-w-0 flex-1 flex-col">
          <TopNav />
          <Header />
          <Toolbar />
          <main className="min-h-0 flex-1 overflow-hidden pt-2.5">
            <Notice />
            <div className="h-[18px]" />
            <HikaMenu />
            <div className="mt-[9px] grid grid-cols-2 items-start gap-[15px] pr-[57px] pl-5">
              <MainInformation />
              <div className="min-w-0">
                <Generic />
                <Specific />
              </div>
            </div>
          </main>
          <StatusBar />
        </div>
        <div className="w-[15px] shrink-0 border-l border-[#ddd] bg-[#fafafa] pt-[3px] pl-[3px]">
          <div className="h-[568px] w-2 rounded-full bg-[#c1c1c1]" />
        </div>
      </div>
    </div>
  );
}
